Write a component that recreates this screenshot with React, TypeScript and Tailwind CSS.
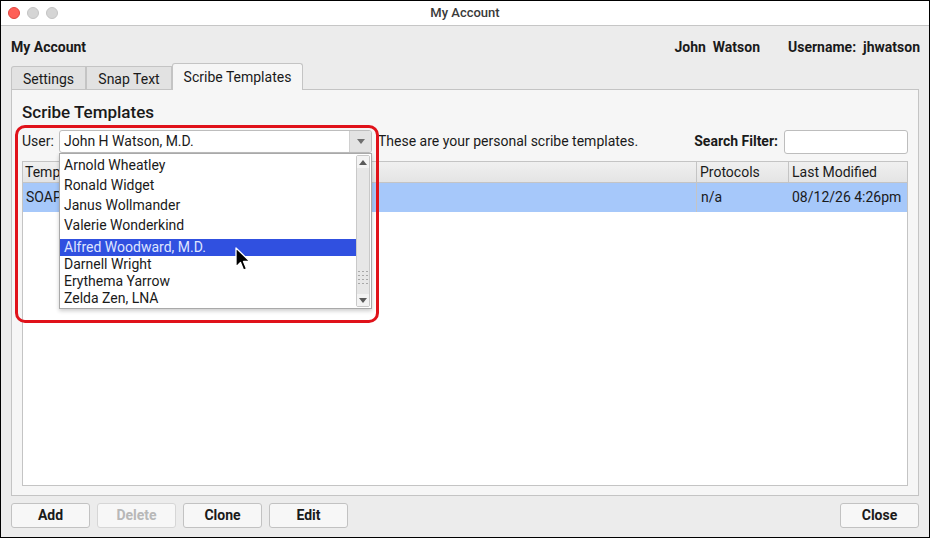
import React from "react";

const font = { fontFamily: "Roboto, 'Liberation Sans', Arial, sans-serif" };

function Tab({ label, active }: { label: string; active?: boolean }) {
  if (active) {
    return (
      <div className="relative z-10 flex h-[27px] w-[131px] items-center justify-center rounded-t-[3px] border border-b-0 border-[#c4c4c4] bg-[#f6f6f6] text-[14px] text-[#1a1a1a]">
        {label}
      </div>
    );
  }
  return (
    <div className="mt-[2px] flex h-[24px] items-center justify-center border border-b-0 border-[#c4c4c4] bg-[#e2e2e2] pt-[1px] text-[14px] text-[#1a1a1a] first:rounded-tl-[3px]">
      {label}
    </div>
  );
}

function Button({ label, disabled, w = "w-[79px]" }: { label: string; disabled?: boolean; w?: string }) {
  return (
    <div
      className={`flex h-[25px] ${w} items-center justify-center rounded-[3px] border border-[#c2c2c2] bg-[#f7f7f7] text-[14px] font-bold ${
        disabled ? "text-[#b8b8b8] border-[#d6d6d6]" : "text-[#1a1a1a]"
      }`}
    >
      {label}
    </div>
  );
}

const people: { name: string; h: string; active?: boolean }[] = [
  { name: "Arnold Wheatley", h: "h-[20px]" },
  { name: "Ronald Widget", h: "h-[20px]" },
  { name: "Janus Wollmander", h: "h-[20px]" },
  { name: "Valerie Wonderkind", h: "h-[20px]" },
  { name: "Alfred Woodward, M.D.", h: "h-[17px] mt-[4px]", active: true },
  { name: "Darnell Wright", h: "h-[17px]" },
  { name: "Erythema Yarrow", h: "h-[17px]" },
  { name: "Zelda Zen, LNA", h: "h-[17px]" },
];

function ScrollBar() {
  return (
    <div className="flex w-[14px] flex-col items-center rounded-[2px] border border-[#c9c9c9] bg-[#e7e7e7]">
      <div className="flex h-[12px] w-full items-center justify-center bg-[#f3f3f3]">
        <svg width="8" height="5" viewBox="0 0 8 5">
          <path d="M0 5 L4 0 L8 5 Z" fill="#5a5a5a" />
        </svg>
      </div>
      <div className="flex w-full flex-1 flex-col justify-end px-[1px]">
        <div className="mb-[6px] flex h-[22px] flex-col items-center justify-center gap-[3px]">
          {[0, 1, 2, 3].map((r) => (
            <div key={r} className="flex gap-[2px]">
              {[0, 1, 2].map((c) => (
                <div key={c} className="h-[1px] w-[2px] bg-[#a8a8a8]" />
              ))}
            </div>
          ))}
        </div>
      </div>
      <div className="flex h-[12px] w-full items-center justify-center bg-[#f3f3f3]">
        <svg width="8" height="5" viewBox="0 0 8 5">
          <path d="M0 0 L8 0 L4 5 Z" fill="#5a5a5a" />
        </svg>
      </div>
    </div>
  );
}

export default function App() {
  return (
    <div
      style={font}
      className="relative flex h-[538px] w-[930px] flex-col overflow-hidden border border-black bg-[#ececec] text-[#1a1a1a]"
    >
      {/* title bar */}
      <div className="relative flex h-[25px] shrink-0 items-center border-b border-[#c6c6c6] bg-white">
        <div className="ml-[7px] flex gap-[7px]">
          <div className="h-[12px] w-[12px] rounded-full bg-[#fe5f57] border border-[#e0443e]" />
          <div className="h-[12px] w-[12px] rounded-full bg-[#d5d5d5] border border-[#c4c4c4]" />
          <div className="h-[12px] w-[12px] rounded-full bg-[#d5d5d5] border border-[#c4c4c4]" />
        </div>
        <div className="absolute inset-0 flex items-center justify-center text-[13px] font-medium text-[#3a3a3a]">
          My Account
        </div>
      </div>

      {/* header */}
      <div className="flex h-[38px] shrink-0 items-end justify-between pb-[6px] pl-[10px] pr-[9px]">
        <div className="text-[14px] font-bold">My Account</div>
        <div className="flex gap-[28px] text-[14px] font-bold">
          <span>John&nbsp; Watson</span>
          <span>Username:&nbsp; jhwatson</span>
        </div>
      </div>

      {/* tabs + panel */}
      <div className="flex flex-1 flex-col px-[10px]">
        <div className="flex h-[26px] items-end">
          <div className="grid grid-cols-[75px_86px] self-end">
            <Tab label="Settings" />
            <Tab label="Snap Text" />
          </div>
          <div>
            <Tab label="Scribe Templates" active />
          </div>
        </div>
        <div className="-mt-[1px] flex h-[407px] flex-col border border-[#c4c4c4] bg-[#f6f6f6] px-[10px] pb-[9px]">
          <div className="flex h-[39px] items-end pb-[4px] text-[17px] font-medium text-[#1a1a1a]">
            Scribe Templates
          </div>
          <div className="flex h-[25px] items-center">
            <span className="w-[37px] text-[14px]">User:</span>
            <div className="flex h-[23px] w-[313px] items-stretch rounded-[3px] border border-[#bdbdbd] bg-white">
              <div className="flex flex-1 items-center pl-[4px] text-[14px]">John H Watson, M.D.</div>
              <div className="flex w-[22px] items-center justify-center rounded-r-[2px] border-l border-[#d0d0d0] bg-[#e3e3e3]">
                <svg width="8" height="5" viewBox="0 0 8 5">
                  <path d="M0 0 L8 0 L4 5 Z" fill="#707070" />
                </svg>
              </div>
            </div>
            <span className="ml-[6px] text-[14px]">These are your personal scribe templates.</span>
            <span className="ml-auto mr-[6px] text-[14px] font-bold">Search Filter:</span>
            <div className="h-[24px] w-[124px] rounded-[3px] border border-[#bdbdbd] bg-white" />
          </div>
          <div className="mt-[7px] flex flex-1 flex-col border border-[#c4c4c4] bg-white">
            <div className="flex h-[21px] border-b border-[#c4c4c4] bg-gradient-to-b from-[#f0f0f0] to-[#e4e4e4] text-[14px]">
              <div className="flex flex-1 items-center pl-[2px]">Temp</div>
              <div className="flex w-[92px] items-center border-l border-[#c4c4c4] pl-[3px]">Protocols</div>
              <div className="flex w-[119px] items-center border-l border-[#c4c4c4] pl-[3px]">Last Modified</div>
            </div>
            <div className="flex h-[29px] bg-[#a6c8fa] text-[14px]">
              <div className="flex flex-1 items-center pl-[3px]">SOAP</div>
              <div className="flex w-[92px] items-center border-l border-[#c4c4c4] pl-[4px]">n/a</div>
              <div className="flex w-[119px] items-center pl-[4px]">08/12/26 4:26pm</div>
            </div>
          </div>
        </div>
      </div>

      {/* bottom buttons */}
      <div className="flex h-[43px] shrink-0 items-start gap-[7px] px-[10px] pt-[7px]">
        <Button label="Add" />
        <Button label="Delete" disabled />
        <Button label="Clone" />
        <Button label="Edit" />
        <div className="ml-auto">
          <Button label="Close" />
        </div>
      </div>

      {/* open user list */}
      <div className="absolute left-[58px] top-[152px] flex h-[156px] w-[313px] border border-[#a9a9a9] bg-white shadow-[0_2px_4px_rgba(0,0,0,0.2)]">
        <div className="flex flex-1 flex-col pt-[1px] text-[14px]">
          {people.map((p) => (
            <div
              key={p.name}
              className={`flex ${p.h} items-center pl-[4px] ${p.active ? "bg-[#3050e0] text-[#dfe5ff]" : ""}`}
            >
              {p.name}
            </div>
          ))}
        </div>
        <div className="flex py-[1px] pr-[1px]">
          <ScrollBar />
        </div>
      </div>

      {/* callout outline */}
      <div className="pointer-events-none absolute left-[14px] top-[124px] h-[198px] w-[364px] rounded-[10px] border-[3px] border-[#e0121a]" />

      {/* mouse pointer */}
      <svg className="absolute left-[233px] top-[246px]" width="18" height="26" viewBox="0 0 18 26">
        <path
          d="M2 1 L2 20 L6.5 15.5 L9.5 23 L12.5 21.8 L9.5 14.5 L16 14.5 Z"
          fill="#000"
          stroke="#fff"
          strokeWidth="1.3"
          strokeLinejoin="round"
        />
      </svg>
    </div>
  );
}
